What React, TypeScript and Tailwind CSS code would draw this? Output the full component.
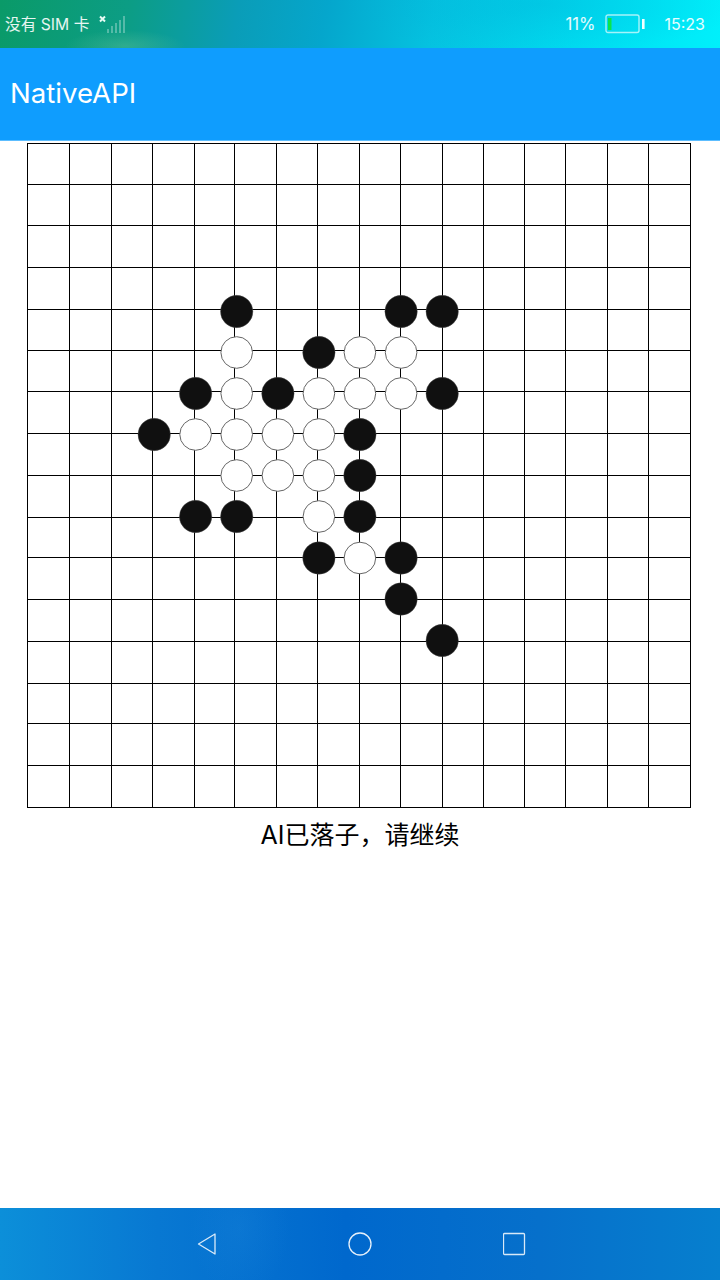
const XS = [27,69,111,152,194,234,276,317,359,400,442,483,524,565,607,648,690];
const YS = [143,184,225,267,309,350,391,433,475,517,557,599,641,683,723,765,807];
const C: Record<string, number> = { a:154.2, b:195.6, c:236.7, d:277.9, e:318.9, f:359.9, g:401.1, h:442.2 };
const ROWS: [number, string, string][] = [
  [311.5, "cgh", ""],
  [352.5, "e", "cfg"],
  [393.5, "bdh", "cefg"],
  [434.5, "af", "bcde"],
  [475.5, "f", "cde"],
  [516.5, "bcf", "e"],
  [558, "eg", "f"],
  [599, "g", ""],
  [640.5, "h", ""],
];

function Board() {
  return (
    <svg width="720" height="667" viewBox="0 141 720 667" className="block">
      <g stroke="#000" strokeWidth="1" shapeRendering="crispEdges">
        {XS.map((x) => <line key={x} x1={x + 0.5} x2={x + 0.5} y1={143} y2={808} />)}
        {YS.map((y) => <line key={y} x1={27} x2={691} y1={y + 0.5} y2={y + 0.5} />)}
      </g>
      {ROWS.map(([y, black, white]) => (
        <g key={y}>
          {black.split("").map((k) => <circle key={k} cx={C[k]} cy={y} r="16.2" fill="#101010" stroke="#555" strokeWidth="0.4" />)}
          {white.split("").filter(Boolean).map((k) => <circle key={k} cx={C[k]} cy={y} r="15.8" fill="#fff" stroke="#666" strokeWidth="1" />)}
        </g>
      ))}
    </svg>
  );
}

function Signal() {
  return (
    <svg width="28" height="20" viewBox="0 0 28 20" className="block">
      <path d="M2 1.5 L7 6.5 M7 1.5 L2 6.5" stroke="#e6fbf4" strokeWidth="2" />
      <g fill="#fff" fillOpacity="0.3">
        <rect x="9" y="14" width="2" height="4" />
        <rect x="13" y="11" width="2" height="7" />
        <rect x="17" y="8" width="2" height="10" />
        <rect x="21" y="5" width="2" height="13" />
        <rect x="25" y="1" width="2" height="17" />
      </g>
    </svg>
  );
}

function Battery() {
  return (
    <svg width="40" height="20" viewBox="0 0 40 20" className="block">
      <rect x="1" y="1" width="33" height="17.5" rx="2" fill="none" stroke="#fff" strokeOpacity="0.65" strokeWidth="1.4" />
      <rect x="3" y="4" width="3.5" height="12" fill="#0be54a" />
      <rect x="37" y="5" width="2.6" height="10" fill="#f2ffff" />
    </svg>
  );
}

export default function App() {
  return (
    <div className="flex h-[1280px] w-[720px] flex-col overflow-hidden bg-white font-['Inter','Noto_Sans_CJK_SC',sans-serif]">
      <header className="flex h-12 shrink-0 items-center justify-between bg-[radial-gradient(ellipse_60px_16px_at_125px_46px,rgba(110,200,160,0.35),transparent),radial-gradient(ellipse_200px_50px_at_540px_4px,rgba(0,175,215,0.35),transparent),linear-gradient(100deg,#0a9a68_0%,#0c9d85_18%,#0a9db8_33%,#05a6cc_45%,#05c2e0_60%,#00dcf0_80%,#00f0fb_100%)] pl-[5px] pr-[15px] text-white/90">
        <div className="flex items-center pt-[1px]">
          <span className="text-[15.7px] leading-none">没有 SIM 卡</span>
          <span className="ml-[9px]"><Signal /></span>
        </div>
        <div className="flex items-center">
          <span className="mr-[9px] text-[16.8px] leading-none">11%</span>
          <Battery />
          <span className="ml-[20px] text-[16px] leading-none">15:23</span>
        </div>
      </header>
      <div className="flex h-[93px] shrink-0 items-center border-b border-[#5cbdff] bg-[#0f9dfe] pl-[10px] text-[27.6px] text-white">
        NativeAPI
      </div>
      <main className="flex flex-1 flex-col items-center">
        <Board />
        <p className="mt-[9px] text-[25px] leading-[36px] text-black">AI已落子，请继续</p>
      </main>
      <nav className="flex h-[72px] shrink-0 items-center gap-[131px] bg-[radial-gradient(ellipse_50px_70px_at_240px_20px,rgba(60,160,230,0.12),transparent),linear-gradient(90deg,#0c8fd9_0%,#0878d2_22%,#0068cd_48%,#0670cb_75%,#067fce_100%)] pb-[1px] pl-[197px]">
        <svg width="20" height="24" viewBox="0 0 20 24" className="block" fill="none" stroke="#fff" strokeOpacity="0.85" strokeWidth="1.3">
          <path d="M1.5 12 L18 2 V22 Z" strokeLinejoin="round" />
        </svg>
        <svg width="24" height="24" viewBox="0 0 24 24" className="block" fill="none" stroke="#fff" strokeOpacity="0.9" strokeWidth="1.3">
          <circle cx="12" cy="12" r="11" />
        </svg>
        <svg width="24" height="24" viewBox="0 0 24 24" className="block" fill="none" stroke="#fff" strokeOpacity="0.85" strokeWidth="1.3">
          <rect x="0.5" y="1.5" width="21" height="21" rx="1" />
        </svg>
      </nav>
    </div>
  );
}
